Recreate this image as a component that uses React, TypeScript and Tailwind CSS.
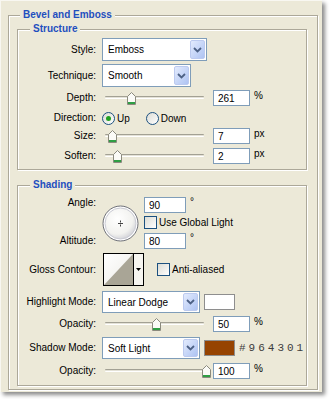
import React from 'react'

const etched = 'border border-[#aca899] shadow-[inset_1px_1px_0_#fff,1px_1px_0_#fff]'

function Legend({ children, className }: { children: React.ReactNode; className: string }) {
  return (
    <legend className={`px-[3px] leading-[14px] text-[10px] font-bold text-[#1f4fbf] bg-[#ece9d8] ${className}`}>
      {children}
    </legend>
  )
}

function Label({ children }: { children: React.ReactNode }) {
  return <div className="w-[78px] shrink-0 text-right leading-[14px]">{children}</div>
}

function Chevron() {
  return (
    <svg width="9" height="6" viewBox="0 0 9 6">
      <path d="M1 1L4.5 4.5L8 1" fill="none" stroke="#4d6185" strokeWidth="1.8" />
    </svg>
  )
}

function Select({ value, className }: { value: string; className: string }) {
  return (
    <div className={`flex items-center justify-between bg-white border border-[#7f9db9] pl-[3px] p-[1px] shrink-0 ${className}`}>
      <span className="pl-[2px]">{value}</span>
      <div className="w-[15px] h-full rounded-[2px] border border-[#bccaef] bg-gradient-to-br from-[#e3ebfd] to-[#aec3f2] flex items-center justify-center">
        <Chevron />
      </div>
    </div>
  )
}

function Field({ value, className = '' }: { value: string; className?: string }) {
  return (
    <div className={`w-[37px] h-[16px] shrink-0 bg-white border border-[#7f9db9] pl-[4px] flex items-center ${className}`}>
      {value}
    </div>
  )
}

function Thumb() {
  return (
    <svg width="9" height="13" viewBox="0 0 9 13">
      <path d="M0.5 4.5L4.5 0.5L8.5 4.5V12.5H0.5Z" fill="#fbfbf7" stroke="#8b8a7e" />
      <rect x="1" y="10" width="7" height="2" fill="#2f9e44" />
    </svg>
  )
}

function SliderRow({ label, value, unit, thumb }: { label: string; value: string; unit: string; thumb: string }) {
  return (
    <div className="flex items-center h-[16px]">
      <Label>{label}</Label>
      <div className="relative w-[108px] h-[16px] ml-[6px] shrink-0">
        <div className="absolute left-[3px] w-[99px] top-[6px] h-[3px] rounded-[1px] bg-[#e4e2d7] border-t border-[#a3a194] border-b border-b-white" />
        <div className={`absolute top-[2px] leading-none ${thumb}`}>
          <Thumb />
        </div>
      </div>
      <Field value={value} className="ml-[3px]" />
      <span className="ml-[4px] self-start leading-[12px]">{unit}</span>
    </div>
  )
}

function Box() {
  return (
    <div className="w-[13px] h-[13px] shrink-0 border border-[#1c5180] bg-gradient-to-br from-[#dcdcd5] to-white" />
  )
}

function Check({ label }: { label: string }) {
  return (
    <div className="flex items-center h-[13px]">
      <Box />
      <span className="ml-[2px] leading-[13px]">{label}</span>
    </div>
  )
}

function Radio({ label, checked }: { label: string; checked?: boolean }) {
  return (
    <div className="flex items-center">
      <div className="w-[13px] h-[13px] rounded-full border border-[#1c5180] bg-gradient-to-br from-[#dcdcd5] to-white flex items-center justify-center">
        {checked && <div className="w-[5px] h-[5px] rounded-full bg-[#21a121]" />}
      </div>
      <span className="ml-[2px]">{label}</span>
    </div>
  )
}

function AngleDial() {
  return (
    <svg width="37" height="37" viewBox="0 0 37 37">
      <defs>
        <radialGradient id="dial" cx="40%" cy="35%" r="70%">
          <stop offset="0%" stopColor="#ffffff" />
          <stop offset="70%" stopColor="#f2f2ef" />
          <stop offset="100%" stopColor="#cfd0d6" />
        </radialGradient>
      </defs>
      <circle cx="18.5" cy="18.5" r="17.5" fill="#ffffff" stroke="#6e7078" strokeWidth="1" />
      <circle cx="18.5" cy="18.5" r="15.5" fill="url(#dial)" stroke="#c9cad3" strokeWidth="1" />
      <path d="M16 18.5H21" stroke="#444" strokeWidth="1" />
      <path d="M18.5 15.5V17.5M18.5 19.5V21.5" stroke="#444" strokeWidth="1" />
    </svg>
  )
}

function Contour() {
  return (
    <svg width="41" height="33" viewBox="0 0 41 33">
      <defs>
        <linearGradient id="cw" x1="0" y1="0" x2="1" y2="1">
          <stop offset="0%" stopColor="#ffffff" />
          <stop offset="100%" stopColor="#ecebe6" />
        </linearGradient>
      </defs>
      <rect x="0.5" y="0.5" width="40" height="32" fill="#f6f5f0" stroke="#000" />
      <rect x="1" y="1" width="29" height="31" fill="url(#cw)" />
      <path d="M1 32L30 1V32Z" fill="#a9a596" />
      <path d="M30.5 0.5V32.5" stroke="#000" />
      <path d="M33 15H38L35.5 18Z" fill="#000" />
    </svg>
  )
}

export default function App() {
  return (
    <div className="w-[331px] h-[399px] bg-white overflow-hidden [font-family:'Liberation_Sans',Arial,sans-serif] text-[10px] text-black">
      <div className="w-[322px] bg-[#ece9d8] border-l border-t border-[#f8f7f1] shadow-[3px_3px_4px_rgba(0,0,0,0.45)] pt-[7px] pl-[7px] pb-[2px]">
        <fieldset className={`w-[310px] pb-[3px] ${etched}`}>
          <Legend className="ml-[11px]">Bevel and Emboss</Legend>

          {/* Structure */}
          <fieldset className={`w-[290px] ml-[8px] pt-[2px] pb-[5px] ${etched}`}>
            <Legend className="ml-[12px]">Structure</Legend>
            <div className="flex items-center h-[23px]">
              <Label>Style:</Label>
              <Select value="Emboss" className="ml-[6px] w-[105px] h-[23px]" />
            </div>
            <div className="flex items-center h-[23px] mt-[3px]">
              <Label>Technique:</Label>
              <Select value="Smooth" className="ml-[6px] w-[89px] h-[23px]" />
            </div>
            <div className="mt-[3px]">
              <SliderRow label="Depth:" value="261" unit="%" thumb="left-[25px]" />
            </div>
            <div className="flex items-center h-[16px] mt-[4px]">
              <Label>Direction:</Label>
              <div className="ml-[6px] flex items-center gap-[16px]">
                <Radio label="Up" checked />
                <Radio label="Down" />
              </div>
            </div>
            <div className="mt-[2px]">
              <SliderRow label="Size:" value="7" unit="px" thumb="left-[6px]" />
            </div>
            <div className="mt-[4px]">
              <SliderRow label="Soften:" value="2" unit="px" thumb="left-[11px]" />
            </div>
          </fieldset>

          {/* Shading */}
          <fieldset className={`w-[290px] ml-[8px] mt-[8px] pt-[5px] pb-[6px] ${etched}`}>
            <Legend className="ml-[12px]">Shading</Legend>
            <div className="flex">
              <div className="w-[78px] shrink-0 flex flex-col justify-between text-right">
                <div className="leading-[14px] -mt-[1px]">Angle:</div>
                <div className="leading-[14px] mb-[1px]">Altitude:</div>
              </div>
              <div className="ml-[6px] self-center leading-none">
                <AngleDial />
              </div>
              <div className="ml-[5px] flex flex-col">
                <div className="flex">
                  <Field value="90" className="w-[42px]" />
                  <span className="ml-[4px] leading-[10px]">°</span>
                </div>
                <div className="mt-[3px]">
                  <Check label="Use Global Light" />
                </div>
                <div className="flex mt-[4px]">
                  <Field value="80" className="w-[42px]" />
                  <span className="ml-[4px] leading-[10px]">°</span>
                </div>
              </div>
            </div>

            <div className="flex items-center h-[33px] mt-[4px]">
              <Label>Gloss Contour:</Label>
              <div className="ml-[7px] leading-none">
                <Contour />
              </div>
              <div className="ml-[13px]">
                <Check label="Anti-aliased" />
              </div>
            </div>

            <div className="flex items-center h-[22px] mt-[5px]">
              <Label>Highlight Mode:</Label>
              <Select value="Linear Dodge" className="ml-[6px] w-[98px] h-[22px]" />
              <div className="ml-[4px] w-[31px] h-[16px] border border-[#8e8e8e] bg-white" />
            </div>
            <div className="mt-[3px]">
              <SliderRow label="Opacity:" value="50" unit="%" thumb="left-[50px]" />
            </div>
            <div className="flex items-center h-[22px] mt-[5px]">
              <Label>Shadow Mode:</Label>
              <Select value="Soft Light" className="ml-[6px] w-[98px] h-[22px]" />
              <div className="ml-[4px] w-[31px] h-[16px] border border-[#8e8e8e] bg-[#964301]" />
              <span className="ml-[4px] [font-family:'Liberation_Mono',monospace] text-[11px] tracking-[3px] text-[#3c3c3c]">
                #964301
              </span>
            </div>
            <div className="mt-[4px]">
              <SliderRow label="Opacity:" value="100" unit="%" thumb="left-[100px]" />
            </div>
          </fieldset>
        </fieldset>
      </div>
    </div>
  )
}
